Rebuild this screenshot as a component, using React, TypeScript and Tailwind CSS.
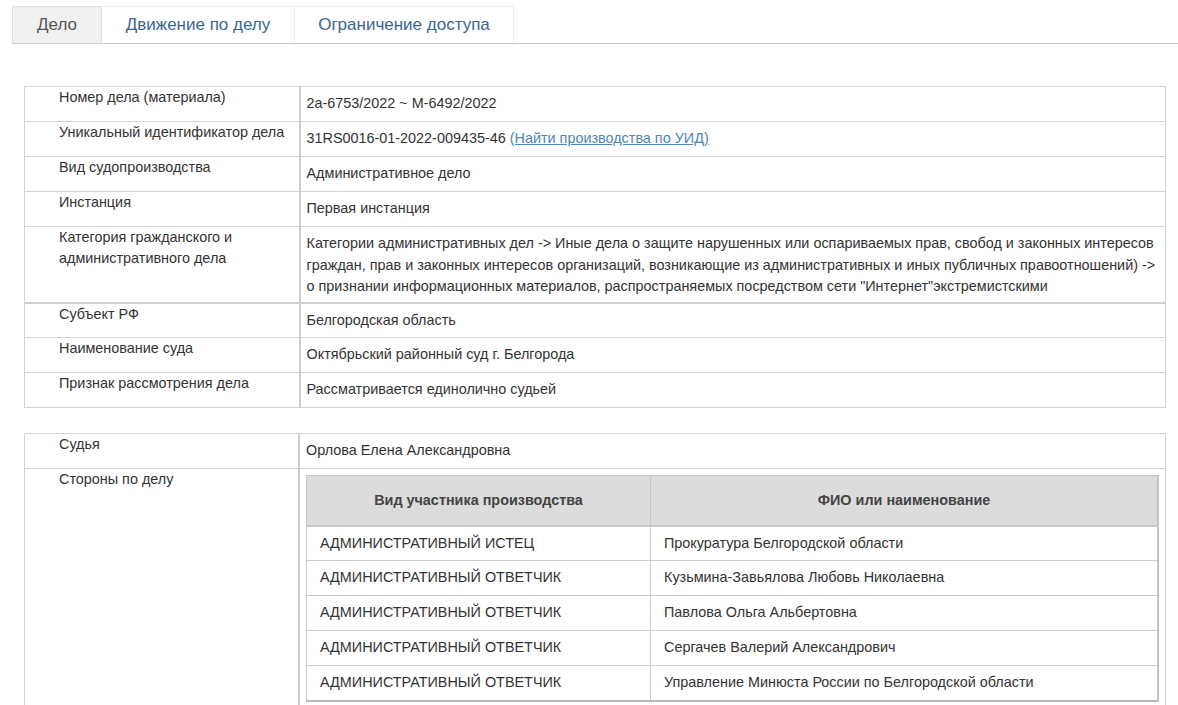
import React from "react";

type Row = { label: React.ReactNode; value: React.ReactNode };

const font = { fontFamily: '"Liberation Sans", Arial, sans-serif' };

const mainRows: Row[] = [
  { label: "Номер дела (материала)", value: "2а-6753/2022 ~ М-6492/2022" },
  {
    label: "Уникальный идентификатор дела",
    value: (
      <>
        31RS0016-01-2022-009435-46{" "}
        <a href="#" className="text-[#4a86b8] underline">
          (Найти производства по УИД)
        </a>
      </>
    ),
  },
  { label: "Вид судопроизводства", value: "Административное дело" },
  { label: "Инстанция", value: "Первая инстанция" },
  {
    label: (
      <>
        Категория гражданского и
        <br />
        административного дела
      </>
    ),
    value: (
      <>
        Категории административных дел -&gt; Иные дела о защите нарушенных или оспариваемых прав, свобод и законных интересов
        <br />
        граждан, прав и законных интересов организаций, возникающие из административных и иных публичных правоотношений) -&gt;
        <br />
        о признании информационных материалов, распространяемых посредством сети "Интернет"экстремистскими
      </>
    ),
  },
  { label: "Субъект РФ", value: "Белгородская область" },
  { label: "Наименование суда", value: "Октябрьский районный суд г. Белгорода" },
  { label: "Признак рассмотрения дела", value: "Рассматривается единолично судьей" },
];

const parties = [
  ["АДМИНИСТРАТИВНЫЙ ИСТЕЦ", "Прокуратура Белгородской области"],
  ["АДМИНИСТРАТИВНЫЙ ОТВЕТЧИК", "Кузьмина-Завьялова Любовь Николаевна"],
  ["АДМИНИСТРАТИВНЫЙ ОТВЕТЧИК", "Павлова Ольга Альбертовна"],
  ["АДМИНИСТРАТИВНЫЙ ОТВЕТЧИК", "Сергачев Валерий Александрович"],
  ["АДМИНИСТРАТИВНЫЙ ОТВЕТЧИК", "Управление Минюста России по Белгородской области"],
];

function Label({ children }: { children: React.ReactNode }) {
  return (
    <td className="w-[275px] align-top border-t border-[#d4d4d4] border-r-2 border-r-[#cfcfcf] pl-[34px] pt-0 pb-[4px] leading-[21px]">
      {children}
    </td>
  );
}

function Value({ children }: { children: React.ReactNode }) {
  return (
    <td className="align-top border-t border-[#d4d4d4] px-[6px] pt-[6px] pb-[4px] leading-[21.6px]">{children}</td>
  );
}

export default function App() {
  return (
    <div className="min-h-screen bg-white text-[14.4px] text-[#333]" style={font}>
      {/* вкладки */}
      <div className="pt-[6px] pl-[12px]">
        <div className="flex border-b border-[#cccccc]">
          <div className="w-[90px] h-[37px] flex items-center justify-center bg-[#f0f0f0] border border-b-0 border-[#dddddd] text-[17px] text-[#555]">
            Дело
          </div>
          <div className="w-[193px] h-[37px] flex items-center justify-center border-t border-r border-[#eeeeee] text-[17px] text-[#3b6690]">
            Движение по делу
          </div>
          <div className="w-[219px] h-[37px] flex items-center justify-center border-t border-r border-[#eeeeee] text-[17px] text-[#3b6690]">
            Ограничение доступа
          </div>
        </div>
      </div>

      <div className="pl-[24px] pr-[12px] pt-[42px]">
        <table className="w-[1142px] border-collapse border border-[#d4d4d4]">
          <tbody>
            {mainRows.map((r, i) => (
              <tr key={i} className={i === 4 ? "border-b-2 border-[#cfcfcf]" : "h-[35px]"}>
                <Label>{r.label}</Label>
                <Value>{r.value}</Value>
              </tr>
            ))}
          </tbody>
        </table>

        <table className="mt-[25px] w-[1142px] border-collapse border border-[#d4d4d4]">
          <tbody>
            <tr className="h-[35px]">
              <Label>Судья</Label>
              <Value>Орлова Елена Александровна</Value>
            </tr>
            <tr>
              <Label>Стороны по делу</Label>
              <td className="align-top border-t border-[#d4d4d4] pl-[6px] pr-[6px] pt-[6px] pb-[6px]">
                <table className="w-[853px] border-collapse border border-[#c8c8c8] border-b-2 border-r-2 border-b-[#bbbbbb] border-r-[#c4c4c4]">
                  <thead>
                    <tr className="bg-[#dcdcdc] h-[50px]">
                      <th className="w-[344px] font-bold text-[#444] text-center border-r border-[#c8c8c8] border-b-2 border-b-[#c8c8c8]">
                        Вид участника производства
                      </th>
                      <th className="font-bold text-[#444] text-center border-b-2 border-[#c8c8c8]">ФИО или наименование</th>
                    </tr>
                  </thead>
                  <tbody>
                    {parties.map((p, i) => (
                      <tr key={i} className="h-[35px] border-t border-[#cccccc]">
                        <td className="pl-[13px] border-r border-[#cccccc]">{p[0]}</td>
                        <td className="pl-[13px]">{p[1]}</td>
                      </tr>
                    ))}
                  </tbody>
                </table>
              </td>
            </tr>
          </tbody>
        </table>
      </div>
    </div>
  );
}
